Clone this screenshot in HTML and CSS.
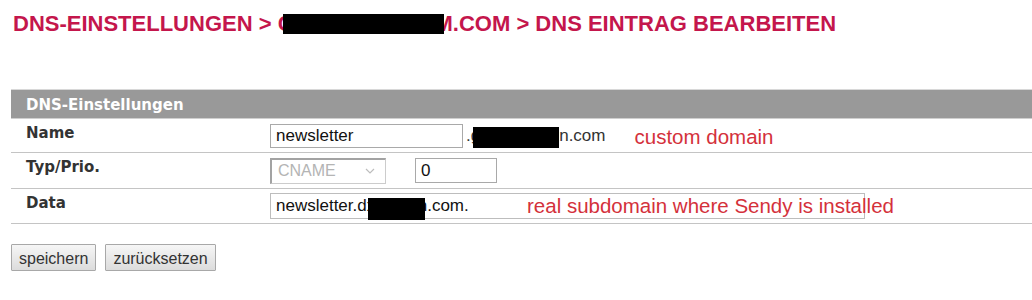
FILE: index.html
```html
<!DOCTYPE html>
<html lang="de">
<head>
  <meta charset="UTF-8">
  <meta name="viewport" content="width=device-width, initial-scale=1.0">
  <title>DNS Eintrag bearbeiten</title>
  <link rel="stylesheet" href="styles.css">
</head>
<body>
  <h1 class="crumbs">DNS-EINSTELLUNGEN &gt; C<span class="redact redact-title"></span>M.COM &gt; DNS EINTRAG BEARBEITEN</h1>

  <div class="dns-box">
    <div class="dns-head">DNS-Einstellungen</div>

    <div class="dns-row row-name">
      <div class="dns-label">Name</div>
      <div class="dns-field">
        <input type="text" class="inp inp-name" value="newsletter">
        <span class="suffix suffix-dot">.g</span>
        <span class="redact redact-domain"></span>
        <span class="suffix">n.com</span>
        <span class="note note-inline">custom domain</span>
      </div>
    </div>

    <div class="dns-row row-type">
      <div class="dns-label">Typ/Prio.</div>
      <div class="dns-field">
        <div class="sel">
          <span>CNAME</span>
          <svg width="10" height="6" viewBox="0 0 10 6"><polyline points="1,1 5,5 9,1" fill="none" stroke="#bdbdbd" stroke-width="1.2"/></svg>
        </div>
        <input type="text" class="inp inp-prio" value="0">
      </div>
    </div>

    <div class="dns-row row-data">
      <div class="dns-label">Data</div>
      <div class="dns-field">
        <div class="data-wrap">
          <input type="text" class="inp inp-data" value="newsletter.dxxxxxxn.com.">
          <span class="redact redact-data"></span>
          <span class="note note-over">real subdomain where Sendy is installed</span>
        </div>
      </div>
    </div>
  </div>

  <div class="actions">
    <button class="btn">speichern</button>
    <button class="btn">zurücksetzen</button>
  </div>
</body>
</html>
```

FILE: styles.css
```css
body {
  margin: 0;
  padding: 0 0 0 11px;
  font-family: "Liberation Sans", Arial, sans-serif;
  background: #ffffff;
  color: #333;
}

.crumbs {
  margin: 11px 0 0 2px;
  font-size: 22px;
  line-height: 26px;
  font-weight: bold;
  color: #c4164c;
  white-space: nowrap;
}

.redact {
  background: #000;
}

.redact-title {
  display: inline-block;
  position: relative;
  z-index: 1;
  width: 161px;
  height: 20px;
  margin: 0 -9px 0 -11px;
  vertical-align: -3px;
}

/* Tabelle */
.dns-box {
  margin-top: 52px;
}

.dns-head {
  padding: 7px 15px 4px;
  background: #999999;
  border-top: 1px solid #d8d8d8;
  border-bottom: 1px solid #cfcfcf;
  color: #ffffff;
  font-family: "DejaVu Sans", Verdana, sans-serif;
  font-size: 15px;
  line-height: 17px;
  font-weight: bold;
}

.dns-row {
  display: grid;
  grid-template-columns: 259px 1fr;
  box-sizing: border-box;
  border-bottom: 1px solid #c4c4c4;
}

.row-name { height: 34px; }
.row-type { height: 36px; }
.row-data { height: 35px; }

.dns-label {
  padding: 6px 15px 0;
  font-family: "DejaVu Sans", Verdana, sans-serif;
  font-size: 15px;
  line-height: 17px;
  font-weight: bold;
  color: #333;
}

.dns-field {
  display: flex;
  align-items: center;
}

.inp {
  box-sizing: border-box;
  margin: 0;
  padding: 0 5px;
  border: 1px solid #a9a9a9;
  font-family: "Liberation Sans", Arial, sans-serif;
  font-size: 17px;
  color: #111;
  background: #fff;
  outline: none;
}

.inp-name {
  width: 193px;
  height: 24px;
}

.suffix {
  font-size: 17px;
  color: #333;
}

.suffix-dot {
  margin-left: 3px;
}

.redact-domain {
  width: 86px;
  height: 21px;
  margin: 3px 0 0 -7px;
}

.note {
  color: #d4313b;
  font-size: 20.5px;
  white-space: nowrap;
}

.note-inline {
  margin-left: 29px;
  position: relative;
  top: 1px;
}

.sel {
  box-sizing: border-box;
  width: 116px;
  height: 26px;
  display: flex;
  align-items: center;
  justify-content: space-between;
  padding: 0 10px 0 6px;
  border: 1px solid #cccccc;
  border-top: 2px solid #a3a3a3;
  border-left: 2px solid #a3a3a3;
  color: #b4b4b4;
  font-size: 16px;
}

.inp-prio {
  width: 82px;
  height: 25px;
  margin-left: 29px;
}

.data-wrap {
  position: relative;
}

.inp-data {
  display: block;
  width: 595px;
  height: 26px;
  border-color: #bdbdbd;
}

.redact-data {
  position: absolute;
  left: 98px;
  top: 5px;
  width: 57px;
  height: 22px;
}

.note-over {
  position: absolute;
  left: 257px;
  top: 1px;
  line-height: 24px;
}

/* Buttons */
.actions {
  display: flex;
  gap: 9px;
  margin-top: 20px;
}

.btn {
  height: 27px;
  box-sizing: border-box;
  padding: 5px 7px 3px;
  border: 1px solid #a8a8a8;
  border-radius: 1px;
  background: linear-gradient(#f6f6f6, #dcdcdc);
  font-family: "Liberation Sans", Arial, sans-serif;
  font-size: 16px;
  line-height: 17px;
  color: #333;
  cursor: pointer;
}
```
